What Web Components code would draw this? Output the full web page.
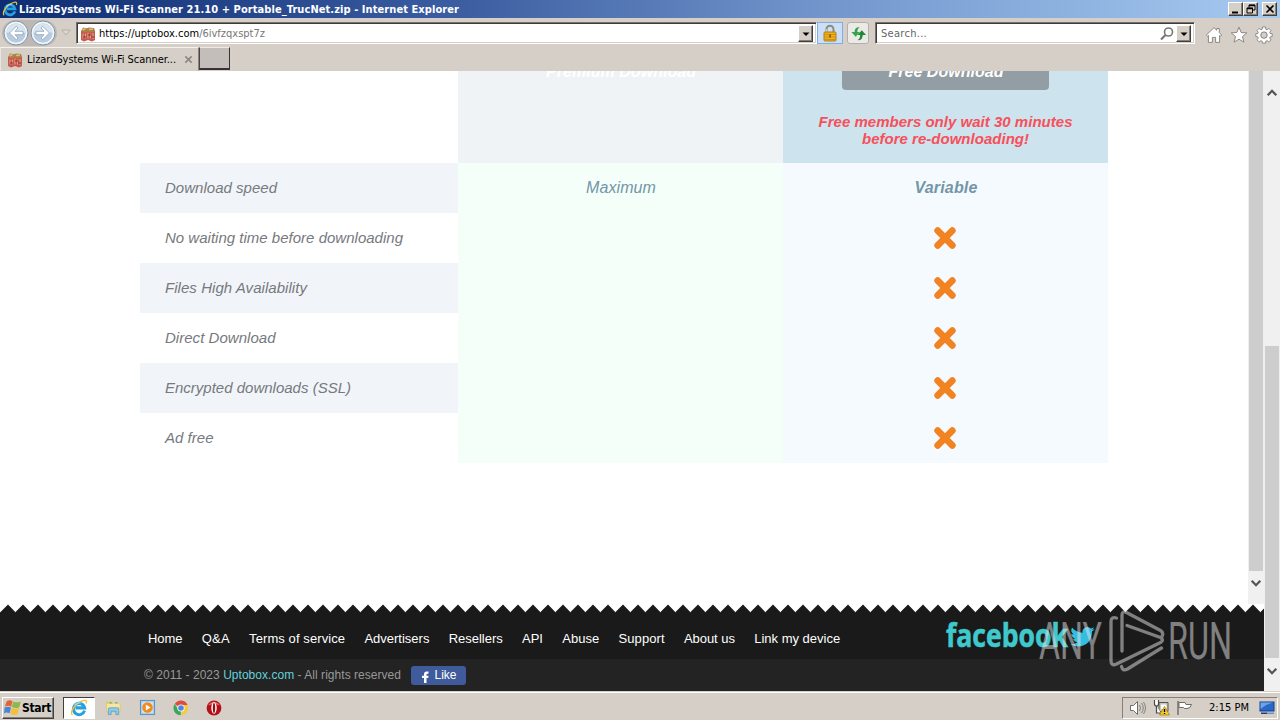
<!DOCTYPE html>
<html lang="en">
<head>
<meta charset="utf-8">
<title>Internet Explorer</title>
<style>
  html, body { height: 100%; }
  body {
    margin: 0;
    overflow: hidden;
    background: #d5cfc8;
    font-family: "DejaVu Sans Condensed", "DejaVu Sans", sans-serif;
    font-size: 11px;
    font-stretch: condensed;
  }
</style>
</head>
<body>
<desktop-screen></desktop-screen>

<script>
(function() {
  // small helper: every component is a static template in an open shadow root
  const define = (name, html, setup) => {
    const template = document.createElement('template');
    template.innerHTML = html.trim();

    customElements.define(name, class extends HTMLElement {
      constructor() {
        super();
        this.attachShadow({ mode: 'open' }).appendChild(template.content.cloneNode(true));
      }

      connectedCallback() {
        if (setup) setup(this, this.shadowRoot);
      }
    });
  };

  const icons = {
    ie: `<svg viewBox="0 0 16 16"><path d="M12.9 10.3A5 5 0 1 1 13 7.9H5" fill="none" stroke="#28a0e0" stroke-width="2.700"/><path d="M2.2 14.2C-1 12 5 3.500 11.500 1.500C14.700.500 15.300 2 14.300 4" fill="none" stroke="#f0bf3c" stroke-width="1.200"/><path d="M4 5.500Q6 3 9.500 3.500" stroke="#8be0fa" fill="none"/></svg>`,
    back: `<svg viewBox="0 0 26 26"><circle cx="13" cy="13" r="12" fill="#e3edf5" stroke="#8496a7"/><circle cx="13" cy="13" r="10.300" fill="#b7cce0" stroke="#fff"/><path d="M3.500 13a9.500 9.500 0 0 1 19 0Q13 10 3.500 13Z" fill="#d8e5f0"/><path d="M20 11.300h-8l3-3.300-1.700-1.700L6.500 13l6.800 6.700L15 18l-3-3.300h8Z" fill="#fff" stroke="#8199b2" stroke-width=".7"/></svg>`,
    forward: `<svg viewBox="0 0 26 26"><circle cx="13" cy="13" r="12" fill="#e3edf5" stroke="#8496a7"/><circle cx="13" cy="13" r="10.300" fill="#b7cce0" stroke="#fff"/><path d="M3.500 13a9.500 9.500 0 0 1 19 0Q13 10 3.500 13Z" fill="#d8e5f0"/><path d="M6 11.300h8L11 8l1.700-1.700 6.800 6.700-6.800 6.700L11 18l3-3.300H6Z" fill="#fff" stroke="#8199b2" stroke-width=".7"/></svg>`,
    history: `<svg viewBox="0 0 10 10"><path d="M.800 2h8.400L5 7Z" fill="#ddd9d2" stroke="#b6afa7"/></svg>`,
    box: `<svg viewBox="0 0 16 16"><path d="M1 5h14v9L12 15.500 8 14l-4 1.500L1 14Z" fill="#c25a4d"/><path d="M1 5 3 1.500l4 .700 2-.700 5 .500L15 5l-3 1.500L8 5.500l-4 1Z" fill="#a9824b"/><path d="M2.500 4l3-1.500M9 3.500l4-.500" stroke="#e3ba6d" stroke-width="1.400"/><path d="M3 7.500v5M5.500 7.500v5M8 6.500v6M10.500 7.500v5M13 7v6" stroke="#f09a86" stroke-width="1.100"/><path d="M3 11h3M8 9h3M11 11h3" stroke="#7c3431"/></svg>`,
    arrow: `<svg viewBox="0 0 10 10"><path d="M1.500 3.500h7L5 7Z" fill="#000"/></svg>`,
    lock: `<svg viewBox="0 0 16 18"><path d="M4.500 9V5.200a3.500 3.500 0 0 1 7 0V9" fill="none" stroke="#8f8a7c" stroke-width="2"/><path d="M4.500 8V5.200" stroke="#d7d4c9"/><rect x="2" y="8" width="12" height="9" rx="1" fill="#eeb21d" stroke="#b27c10"/><path d="M2.500 10.500h11M2.500 13h11M2.500 15.500h11" stroke="#c88810" stroke-width=".8"/><path d="M8 10.500v3" stroke="#77520d" stroke-width="1.500"/></svg>`,
    refresh: `<svg viewBox="0 0 18 18"><path d="M10.500 2.500Q5 1.500 4.800 7.500H1.500L6 12.500 10.500 7.500H7.800Q7.600 4 10.500 2.500Z" fill="#36a449"/><path d="M8 16Q13.300 16.500 13.500 10.500H17L12.500 5.500 8 10.500H10.700Q10.900 14.500 8 16Z" fill="#218838"/></svg>`,
    search: `<svg viewBox="0 0 16 16"><circle cx="9.500" cy="6" r="4" fill="#fff" stroke="#777" stroke-width="1.600"/><path d="M6.500 9 2 13.500" stroke="#777" stroke-width="2.200"/></svg>`,
    home: `<svg viewBox="0 0 18 18"><path d="M1.300 9 9 1.600l2.700 2.600V2.500h2.600v4.100L16.700 9l-1.200 1.200-.900-.800v7h-4v-5H7.400v5h-4v-7l-.900.800Z" fill="#fff" stroke="#8b8783"/></svg>`,
    star: `<svg viewBox="0 0 18 18"><path d="m9 1.200 2.200 5.300 5.600.4-4.300 3.700 1.400 5.600L9 13.200l-4.900 3 1.400-5.600L1.200 6.900l5.600-.4Z" fill="#fff" stroke="#8b8783"/></svg>`,
    gear: `<svg viewBox="0 0 18 18"><path d="m7.500 1 3 0 .3 2.200 1.300.500L13.900 2.400 16 4.500l-1.300 1.800.500 1.200 2 .2v2.900l-2 .3-.500 1.200 1.300 1.700-2.100 2.100-1.800-1.200-1.300.500-.3 2h-3l-.3-2-1.300-.500-1.800 1.200L2 13.800l1.300-1.700-.500-1.200-2-.3V7.700l2-.2.500-1.200L2 4.500l2.100-2.100 1.800 1.300 1.300-.500Z" fill="#fff" stroke="#85817d" stroke-width=".9"/><circle cx="9" cy="9.100" r="3.200" fill="#d5cfc8" stroke="#85817d"/></svg>`,
    cross: `<svg viewBox="0 0 24 24"><path d="m4.700 4.700 14.600 14.600M19.300 4.700 4.700 19.300" stroke="#f28322" stroke-width="6.800" stroke-linecap="round"/></svg>`,
    closetab: `<svg viewBox="0 0 10 10"><path d="m1.500 1.500 7 7m0-7-7 7" stroke="#8d8984" stroke-width="1.900"/></svg>`,
    minimize: `<svg viewBox="0 0 12 10"><path d="M2 8.500h6" stroke="#000" stroke-width="2"/></svg>`,
    restore: `<svg viewBox="0 0 12 10"><path d="M4 3.500V1h6v5H8" fill="none" stroke="#000"/><path d="M4 1.500h6M2 4.500h6" stroke="#000" stroke-width="1.500"/><path d="M2 4h5.500v5H2Z" fill="none" stroke="#000"/></svg>`,
    close: `<svg viewBox="0 0 12 10"><path d="m2.500 1.500 7 7m0-7-7 7" stroke="#000" stroke-width="1.600"/></svg>`,
    up: `<svg viewBox="0 0 12 12"><path d="m1.700 8.300 4.300-4.500 4.300 4.500" fill="none" stroke="#555" stroke-width="2.300"/></svg>`,
    down: `<svg viewBox="0 0 12 12"><path d="m1.700 3.700 4.300 4.500 4.300-4.500" fill="none" stroke="#555" stroke-width="2.300"/></svg>`,
    windows: `<svg viewBox="0 0 16 16"><path d="M2.500 2q2.800-1.700 5.500 0L6.800 7.200Q4 5.700.800 7.200Z" fill="#e66338"/><path d="M8.700 2.300q3.200 1.700 7 0L14.400 7.700Q11 9.400 7.500 7.500Z" fill="#8cba48"/><path d="M.600 8q3.200-1.600 6 0l-1.300 5.300q-3-1.400-5.300 0Z" fill="#4b86d4"/><path d="M7.300 8.400q3.400 1.700 6.900 0L12.800 14q-3.500 1.600-6.800 0Z" fill="#f4be36"/></svg>`,
    folder: `<svg viewBox="0 0 18 18"><path d="M1 3h6l1 1.500h8.500V14H1Z" fill="#e3c770"/><path d="M2 5h13.500v8H2Z" fill="#f6e6a4"/><path d="M5 4h2M11 4h2" stroke="#70b554" stroke-width="1.500"/><path d="M3.500 16.500V10.500q0-1.200 1.200-1.200h8.600q1.200 0 1.200 1.200v6h-3V13H6.500v3.500Z" fill="#8accea" stroke="#4c91bd" stroke-width=".7"/></svg>`,
    media: `<svg viewBox="0 0 18 18"><rect x="1.500" y="1.500" width="15" height="15" fill="#a8cff0" stroke="#568ec0"/><rect x="3.500" y="3.500" width="11" height="11" fill="#d9eaf6"/><circle cx="9" cy="9" r="5.600" fill="#f28b19"/><path d="m7.200 5.700 5 3.300-5 3.300Z" fill="#fff"/></svg>`,
    chrome: `<svg viewBox="0 0 16 16"><path d="M8 8 1.700 4A7.200 7.200 0 0 1 14.600 5H8Z" fill="#df4b3d"/><path d="M8 8 7.700 15.200A7.200 7.200 0 0 1 1.700 4L5 9Z" fill="#3fa657"/><path d="M8 5h6.600A7.200 7.200 0 0 1 7.700 15.200L11 9Z" fill="#f6ca3d"/><circle cx="8" cy="8" r="3.600" fill="#fff"/><circle cx="8" cy="8" r="2.800" fill="#4b87e0"/></svg>`,
    opera: `<svg viewBox="0 0 16 16"><ellipse cx="8" cy="8" rx="7.400" ry="7.500" fill="#b31117"/><path d="M2 5.500Q8-2 14 5.500Q8 3 2 5.500Z" fill="#e8736d"/><ellipse cx="8" cy="8" rx="2.700" ry="5.700" fill="#fff"/><ellipse cx="8" cy="8" rx="1.200" ry="5" fill="#981015"/></svg>`,
    sound: `<svg viewBox="0 0 17 16"><path d="M1.500 5.500h3L8.500 1.500v13l-4-4h-3Z" fill="#fff" stroke="#706c68"/><path d="M10.500 5q2 3 0 6M12.500 3q3.500 5 0 10M14.500 2q4 6 0 12" fill="none" stroke="#85817c"/></svg>`,
    network: `<svg viewBox="0 0 17 17"><path d="M6 3.500h9v9H6Z" fill="#c9c6ba" stroke="#59564f"/><path d="M8 5.500h5.500V10H8Z" fill="#fff"/><path d="M1.500 1v4q0 2 2 2t2-2V1M3.500 7v7H8" fill="#fff" stroke="#4e4b47" stroke-width="1.200"/><path d="m11.500 7.500 5 8.500h-10Z" fill="#f8ce24" stroke="#9b7911" stroke-width=".7"/><path d="M11.500 10v3M11.500 14v1" stroke="#000" stroke-width="1.300"/></svg>`,
    flag: `<svg viewBox="0 0 17 16"><path d="M2 1v14" stroke="#7e7a76" stroke-width="1.700"/><path d="M3 2.500h6l1 2h5.500q-1 4-4.500 4H8.500l-1-1H3Z" fill="#fff" stroke="#6e6a66"/></svg>`,
    monitor: `<svg viewBox="0 0 16 14"><rect x="1" y="1" width="14" height="9" fill="#2869c8" stroke="#163d86"/><path d="M1.500 1.500h13Q7 3 1.500 8Z" fill="#6ba2e8"/><path d="M2 11.500h6v1.500H2Z" fill="#233c70"/><path d="M8 11.500h7v1.500H8Z" fill="#6891cb"/></svg>`,
    fb: `<svg viewBox="0 0 10 12"><path d="M4 12V7H2V4.700h2V3.200Q4 .500 6.800.500h1.700v2.200H7.400q-.9 0-.9.900v1.100h2L8.200 7H6.500v5Z" fill="#fff"/></svg>`,
    bird: `<svg viewBox="0 0 30 24"><path d="M29.500 3q-1.500.8-3.200 1 1.800-1.200 2.500-3-1.800 1-3.700 1.300A6 6 0 0 0 15 7.600Q7.500 7.300 2.400 1.300q-2.600 4.700 1.900 8-1.500 0-2.700-.700 0 4.500 4.800 5.900-1.300.4-2.700.1 1.500 4 5.600 4.100-3.600 3-8.800 2.700 4 2.500 8.800 2.500C20 23.900 26.700 16.500 26.400 6q1.800-1.200 3.100-3Z" fill="#35bde0"/></svg>`
  };

  define('ui-icon', `
    <style>
      :host { display: block; flex: none; }
      svg { display: block; width: 100%; height: 100%; overflow: visible; }
    </style>
    <div></div>
  `, (host, root) => {
    const [w, h] = host.getAttribute('size').split(' ');
    host.style.width = w + 'px';
    host.style.height = (h || w) + 'px';
    const holder = root.querySelector('div');
    holder.style.height = '100%';
    holder.innerHTML = icons[host.getAttribute('name')];
  });

  // a run of text, tracked so that it takes exactly the given width
  define('fit-text', `
    <style>
      :host { display: block; flex: none; white-space: nowrap; }
      span { display: inline-block; }
    </style>
    <span><slot></slot></span>
  `, (host, root) => {
    const width = Number(host.getAttribute('width'));
    const span = root.querySelector('span');
    const fit = () => {
      const nodes = root.querySelector('slot').assignedNodes({ flatten: true });
      const count = nodes.map((node) => node.textContent).join('').trim().length;
      if (!count) return;
      span.style.letterSpacing = '0';
      span.style.letterSpacing = (width - span.getBoundingClientRect().width) / count + 'px';
      host.style.width = width + 'px';
    };
    fit();
    requestAnimationFrame(fit);
  });

  define('classic-button', `
    <style>
      :host {
        display: flex;
        align-items: center;
        justify-content: center;
        box-sizing: border-box;
        background: #d5cfc8;
        border: 1px solid;
        border-color: #fff #404040 #404040 #fff;
        box-shadow: inset -1px -1px #85807a;
      }
    </style>
    <slot></slot>
  `);

  define('title-bar', `
    <style>
      :host {
        display: flex;
        align-items: center;
        box-sizing: border-box;
        height: 18px;
        padding: 0 3px 0 2px;
        background: linear-gradient(90deg, #0d2c72, #3a5ca0 35%, #7397cd 65%, #a6caf0);
        color: #fff;
        font-weight: bold;
      }
      fit-text { margin-left: 1px; }
      .buttons { display: flex; margin-left: auto; }
      classic-button { width: 15px; height: 14px; }
      classic-button:last-child { margin-left: 4px; }
    </style>
    <ui-icon name="ie" size="16"></ui-icon>
    <fit-text width="440"><slot></slot></fit-text>
    <div class="buttons">
      <classic-button><ui-icon name="minimize" size="12 10"></ui-icon></classic-button>
      <classic-button><ui-icon name="restore" size="12 10"></ui-icon></classic-button>
      <classic-button><ui-icon name="close" size="12 10"></ui-icon></classic-button>
    </div>
  `);

  define('input-field', `
    <style>
      :host {
        display: flex;
        align-items: center;
        box-sizing: border-box;
        height: 22px;
        border: 1px solid;
        border-color: #77706b #fff #fff #77706b;
        box-shadow: inset 1px 1px #413a3b, inset -1px -1px #d5cfc8;
        background: #fff;
        padding: 1px 3px 0 3px;
      }
      classic-button { width: 15px; height: 17px; }
      .end { display: flex; align-items: center; margin-left: auto; }
    </style>
    <slot></slot>
    <div class="end">
      <slot name="end"></slot>
      <classic-button><ui-icon name="arrow" size="10"></ui-icon></classic-button>
    </div>
  `);

  define('nav-bar', `
    <style>
      :host {
        display: flex;
        align-items: center;
        box-sizing: border-box;
        height: 28px;
        padding: 2px 7px 0 2px;
      }
      .round { display: flex; gap: 1px; padding: 0 1px; border-radius: 13px; background: #bdb8b4; }
      .history { margin: 0 5px 0 4px; }
      .address { width: 741px; }
      .address fit-text { margin-left: 3px; }
      .path { color: #777; }
      .lock, .reload { display: flex; align-items: center; justify-content: center; box-sizing: border-box; height: 22px; }
      .lock { width: 26px; background: #cbe0f8; border: 1px solid #80aede; }
      .reload { width: 22px; margin-left: 4px; background: #eceae7; border: 1px solid #b5afa9; border-radius: 3px; }
      .search { width: 320px; margin-left: 6px; color: #666; }
      .search fit-text { margin-left: 2px; }
      .search ui-icon { margin-right: 1px; }
      .tools { display: flex; gap: 7px; margin: 3px 0 0 auto; }
    </style>
    <div class="round">
      <ui-icon name="back" size="26"></ui-icon>
      <ui-icon name="forward" size="26"></ui-icon>
    </div>
    <ui-icon class="history" name="history" size="10"></ui-icon>
    <input-field class="address">
      <ui-icon name="box" size="16"></ui-icon>
      <fit-text width="166">https://uptobox.com<span class="path">/6ivfzqxspt7z</span></fit-text>
    </input-field>
    <div class="lock"><ui-icon name="lock" size="16 18"></ui-icon></div>
    <div class="reload"><ui-icon name="refresh" size="17"></ui-icon></div>
    <input-field class="search">
      <fit-text width="46">Search...</fit-text>
      <ui-icon slot="end" name="search" size="16"></ui-icon>
    </input-field>
    <div class="tools">
      <ui-icon name="home" size="18"></ui-icon>
      <ui-icon name="star" size="18"></ui-icon>
      <ui-icon name="gear" size="18"></ui-icon>
    </div>
  `);

  define('tab-strip', `
    <style>
      :host { display: flex; align-items: flex-start; height: 25px; padding-top: 1px; box-sizing: border-box; }
      .tab {
        display: flex;
        align-items: center;
        box-sizing: border-box;
        width: 199px;
        height: 24px;
        padding: 1px 5px 0 6px;
        border: 1px solid;
        border-color: #f4f2ef #8a847e transparent #e8e5e2;
      }
      .tab fit-text { margin-left: 4px; }
      .tab .x { margin-left: auto; }
      .new {
        box-sizing: border-box;
        width: 31px;
        height: 23px;
        background: #c3beba;
        border: 1px solid;
        border-width: 1px 1px 2px 1px;
        border-color: #eeeae7 #363334 #363334 #4a4647;
      }
    </style>
    <div class="tab">
      <ui-icon name="box" size="16"></ui-icon>
      <fit-text width="149"><slot></slot></fit-text>
      <ui-icon class="x" name="closetab" size="9"></ui-icon>
    </div>
    <div class="new"></div>
  `);

  define('scroll-bar', `
    <style>
      :host { display: flex; flex-direction: column; box-sizing: border-box; width: 16px; background: #f0f0f0; padding: 0 1px; }
      .arrow { display: flex; justify-content: center; }
      .up { padding-top: 16px; }
      .down { margin-top: auto; }
      .thumb { background: #cdcdcd; }
    </style>
    <div class="arrow up"><ui-icon name="up" size="12"></ui-icon></div>
    <div class="thumb"></div>
    <div class="arrow down"><ui-icon name="down" size="12"></ui-icon></div>
  `, (host, root) => {
    const [offset, length, bottom] = host.getAttribute('thumb').split(' ').map(Number);
    const up = root.querySelector('.up');
    if (offset) {
      up.style.height = offset - 16 + 'px';
    } else {
      up.style.display = 'none';
    }
    root.querySelector('.thumb').style.height = length + 'px';
    root.querySelector('.down').style.paddingBottom = bottom + 'px';
  });

  define('feature-row', `
    <style>
      :host { display: grid; grid-template-columns: 318px 325px 325px; height: 50px; }
      div { display: flex; align-items: center; justify-content: center; box-sizing: border-box; }
      .name { justify-content: flex-start; padding: 0 0 2px 25px; color: #76797d; font-size: 15px; }
      :host([shaded]) .name { background: #f1f5f9; }
      .premium { background: #f4fff9; padding-left: 1px; }
      .free { background: #f5fafe; font-weight: bold; }
      .free slot::slotted(*) { margin-left: 1px; }
      .free ui-icon { margin-right: 1px; }
      .premium, .free { color: #7396a8; font-size: 16px; }
    </style>
    <div class="name"><slot></slot></div>
    <div class="premium"><slot name="premium"></slot></div>
    <div class="free"><slot name="free"><ui-icon name="cross" size="24"></ui-icon></slot></div>
  `);

  define('offer-head', `
    <style>
      :host { display: grid; grid-template-columns: 318px 325px 325px; height: 92px; overflow: hidden; font-weight: bold; text-align: center; }
      .premium, .free { display: flex; flex-direction: column; align-items: center; color: #fff; font-size: 16px; }
      .premium { background: #eff3f6; }
      .free { background: #cde3ee; }
      .button {
        display: flex;
        align-items: center;
        justify-content: center;
        flex: none;
        box-sizing: border-box;
        width: 207px;
        height: 38px;
        margin-top: -19px;
        padding: 2px 0 0 1px;
        border-radius: 4px;
      }
      .free .button { background: #939ea4; }
      .note { margin-top: 23px; color: #f7505a; font-size: 15px; line-height: 17px; }
      .note fit-text { margin: 0 auto; }
    </style>
    <div></div>
    <div class="premium"><div class="button"><fit-text width="150">Premium Download</fit-text></div></div>
    <div class="free">
      <div class="button"><fit-text width="115">Free Download</fit-text></div>
      <div class="note">
        <fit-text width="254">Free members only wait 30 minutes</fit-text>
        <fit-text width="167">before re-downloading!</fit-text>
      </div>
    </div>
  `);

  define('offer-page', `
    <style>
      :host { display: flex; height: 533px; background: #fff; }
      .body {
        flex: 1;
        padding-left: 140px;
        font-family: "Liberation Sans", Arial, sans-serif;
        font-stretch: normal;
        font-style: italic;
      }
    </style>
    <div class="body">
      <offer-head></offer-head>
      <feature-row shaded><fit-text width="112">Download speed</fit-text><fit-text slot="premium" width="70">Maximum</fit-text><fit-text slot="free" width="63">Variable</fit-text></feature-row>
      <feature-row><fit-text width="238">No waiting time before downloading</fit-text></feature-row>
      <feature-row shaded><fit-text width="142">Files High Availability</fit-text></feature-row>
      <feature-row><fit-text width="110.500">Direct Download</fit-text></feature-row>
      <feature-row shaded><fit-text width="186">Encrypted downloads (SSL)</fit-text></feature-row>
      <feature-row><fit-text width="48.500">Ad free</fit-text></feature-row>
    </div>
    <scroll-bar thumb="0 500 15"></scroll-bar>
  `);

  define('page-footer', `
    <style>
      :host {
        display: flex;
        flex-direction: column;
        height: 87px;
        background: #fff;
        font-family: "Liberation Sans", Arial, sans-serif;
        font-stretch: normal;
        font-size: 13px;
      }
      .teeth { display: block; width: 100%; height: 9px; flex: none; }
      .links { display: flex; height: 46px; background: #1a1a1a; padding-left: 148px; color: #fff; align-items: center; }
      .links nav { display: flex; gap: 19.300px; margin-top: 4px; }
      .logo { display: block; width: 124px; height: 42px; margin: -4px 0 0 106px; overflow: visible; }
      .bird { margin: 0; }
      .legal { display: flex; align-items: center; flex: 1; background: #232323; padding: 0 0 0 144px; color: #999; font-size: 12px; }
      .legal b { font-weight: normal; color: #63d0dc; }
      .like {
        display: flex;
        align-items: center;
        justify-content: center;
        gap: 4px;
        width: 55px;
        height: 19px;
        margin-left: 10px;
        border-radius: 3px;
        background: #3f5b9b;
        color: #fff;
      }
      .like ui-icon { margin-top: 3px; }
    </style>
    <svg class="teeth">
      <defs>
        <pattern id="tooth" width="15" height="9" patternUnits="userSpaceOnUse">
          <path d="M0 9V8.500L.500 8 8 .500 15 7.700V9Z" fill="#1a1a1a"/>
        </pattern>
      </defs>
      <rect width="1264" height="9" fill="url(#tooth)"/>
    </svg>
    <div class="links">
      <nav>
        <fit-text width="34.500">Home</fit-text>
        <fit-text width="28">Q&amp;A</fit-text>
        <fit-text width="96">Terms of service</fit-text>
        <fit-text width="65">Advertisers</fit-text>
        <fit-text width="54">Resellers</fit-text>
        <fit-text width="21">API</fit-text>
        <fit-text width="37">Abuse</fit-text>
        <fit-text width="46">Support</fit-text>
        <fit-text width="51">About us</fit-text>
        <fit-text width="86">Link my device</fit-text>
      </nav>
      <svg class="logo" viewBox="0 0 124 42">
        <text x="0" y="34" textLength="122" lengthAdjust="spacingAndGlyphs" font-family="Open Sans, sans-serif" font-weight="700" font-size="33" fill="#40c9cd" stroke="#40c9cd" stroke-width=".6">facebook</text>
      </svg>
      <ui-icon class="bird" name="bird" size="25 21"></ui-icon>
    </div>
    <div class="legal">
      <fit-text width="257">© 2011 - 2023 <b>Uptobox.com</b> - All rights reserved</fit-text>
      <div class="like"><ui-icon name="fb" size="10 12"></ui-icon>Like</div>
    </div>
  `);

  // translucent mark that floats over the corner of the screen
  define('water-mark', `
    <style>
      :host { position: absolute; left: 1038px; top: 608px; width: 196px; height: 66px; opacity: .5; }
      svg { display: block; overflow: visible; }
      text { font: 400 52px Roboto, sans-serif; fill: #e5e5e5; }
    </style>
    <svg width="196" height="66" viewBox="0 0 196 66">
      <text x="1" y="51" textLength="63" lengthAdjust="spacingAndGlyphs">ANY</text>
      <text x="130" y="51" textLength="64" lengthAdjust="spacingAndGlyphs">RUN</text>
      <g fill="none" stroke="#e5e5e5" stroke-width="3.300" stroke-linejoin="round" stroke-linecap="round">
        <path d="M78.500 10q-5.500-1.500-5.500 3.500v39q0 6 5.500 3.500l44-21.500q4-2.500 0-5L89 17.500"/>
        <path d="M84 43V7q0-4.500 4.500-2.500l34 18q3.500 2 1.500 6"/>
        <path d="M83.500 58.500q1 5 6 2.500l34-21"/>
      </g>
    </svg>
  `);

  define('task-bar', `
    <style>
      :host {
        display: flex;
        align-items: center;
        box-sizing: border-box;
        height: 29px;
        padding: 3px 2px 0 2px;
        background: #d5cfc8;
        border-top: 1px solid #d5cfc8;
        box-shadow: inset 0 1px #fff;
      }
      .start { width: 52px; height: 22px; justify-content: flex-start; gap: 1px; padding-left: 1px; font-weight: bold; font-size: 12px; }
      .active {
        display: flex;
        align-items: center;
        justify-content: center;
        box-sizing: border-box;
        width: 32px;
        height: 22px;
        margin-left: 9px;
        background: #fff;
        border: 1px solid;
        border-color: #404040 #fff #fff #404040;
      }
      .apps { display: flex; align-items: center; gap: 17px; margin-left: 10px; }
      .tray {
        display: flex;
        align-items: center;
        box-sizing: border-box;
        width: 156px;
        height: 22px;
        margin-left: auto;
        padding: 0 2px 0 6px;
        border: 1px solid;
        border-color: #85807a #fff #fff #85807a;
      }
      .tray > :nth-child(2) { margin-left: 7px; }
      .tray > :nth-child(3) { margin-left: 6px; }
      .tray fit-text { margin-left: 16px; }
      .tray > :last-child { margin-left: auto; }
    </style>
    <classic-button class="start"><ui-icon name="windows" size="17"></ui-icon><fit-text width="29">Start</fit-text></classic-button>
    <div class="active"><ui-icon name="ie" size="18"></ui-icon></div>
    <div class="apps">
      <ui-icon name="folder" size="17"></ui-icon>
      <ui-icon name="media" size="17"></ui-icon>
      <ui-icon name="chrome" size="16"></ui-icon>
      <ui-icon name="opera" size="16"></ui-icon>
    </div>
    <div class="tray">
      <ui-icon name="sound" size="17 16"></ui-icon>
      <ui-icon name="network" size="17"></ui-icon>
      <ui-icon name="flag" size="17 16"></ui-icon>
      <fit-text width="40">2:15 PM</fit-text>
      <ui-icon name="monitor" size="16 14"></ui-icon>
    </div>
  `);

  define('desktop-screen', `
    <style>
      :host { display: flex; flex-direction: column; position: relative; width: 1280px; height: 720px; overflow: hidden; }
      .view { display: flex; height: 620px; }
      .page { width: 1264px; }
    </style>
    <title-bar>LizardSystems Wi-Fi Scanner 21.10 + Portable_TrucNet.zip - Internet Explorer</title-bar>
    <nav-bar></nav-bar>
    <tab-strip>LizardSystems Wi-Fi Scanner...</tab-strip>
    <div class="view">
      <div class="page">
        <offer-page></offer-page>
        <page-footer></page-footer>
      </div>
      <scroll-bar thumb="275 312 14"></scroll-bar>
    </div>
    <task-bar></task-bar>
    <water-mark></water-mark>
  `);
})();
</script>
</body>
</html>
